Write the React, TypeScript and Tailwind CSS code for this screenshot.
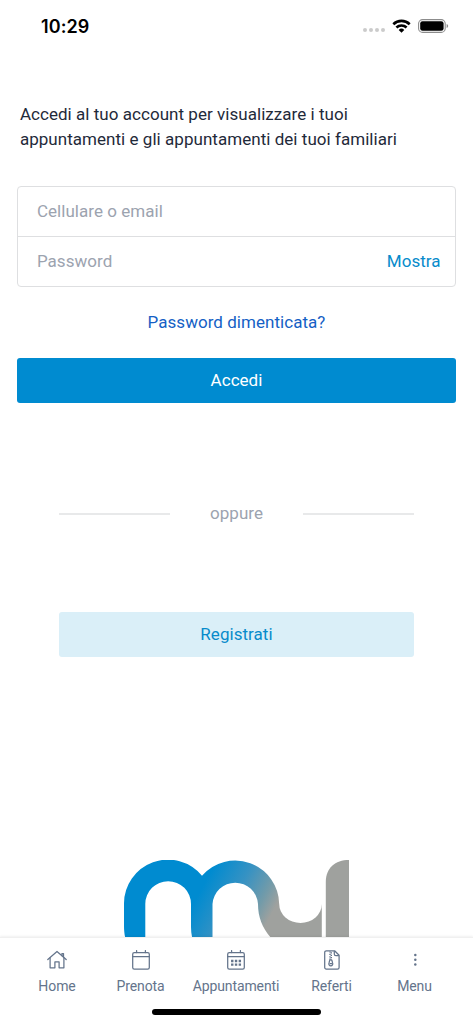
import type { ReactNode } from "react";

function HomeIcon() {
  return (
    <svg width="20" height="20" viewBox="0 0 20 20" fill="none" stroke="currentColor" strokeWidth="1.25" strokeLinecap="round" strokeLinejoin="round">
      <path d="M.8 9.5 10 1.5l9.2 8" />
      <path d="M3.1 7.8v10h4.8v-5.9h4.2v5.9h4.8v-10" />
      <path d="M14.9 5.6V3.6h1.6v3.4" />
    </svg>
  );
}

function CalendarIcon({ days = false }: { days?: boolean }) {
  return (
    <svg width="20" height="20" viewBox="0 0 20 20" fill="none" stroke="currentColor" strokeWidth="1.25" strokeLinecap="round">
      <rect x="1.7" y="2.6" width="16.6" height="16.4" rx="1.6" />
      <path d="M1.7 6.6h16.6M5.6.6v2M14.4.6v2" />
      {days && (
        <path d="M6.2 11h.1M10 11h.1M13.8 11h.1M6.2 14.7h.1M10 14.7h.1M13.8 14.7h.1" strokeWidth="2.3" strokeLinecap="square" />
      )}
    </svg>
  );
}

function ZipFileIcon() {
  return (
    <svg width="20" height="20" viewBox="0 0 20 20" fill="none" stroke="currentColor" strokeWidth="1.25" strokeLinejoin="round">
      <path d="M4.3.8h8.3l4.5 4.5v12.2a1.6 1.6 0 0 1-1.6 1.6H4.3a1.6 1.6 0 0 1-1.6-1.6V2.4A1.6 1.6 0 0 1 4.3.8Z" />
      <path d="M12.3 1v3a1.6 1.6 0 0 0 1.6 1.6h3" />
      <path d="M8 1.4v8.4M9.3 2.3v8" strokeWidth="1.4" strokeDasharray="1.2 1.2" />
      <path d="M7.8 10h2l.8 3a2 2 0 1 1-3.6 0Z" strokeWidth="1.2" />
      <path d="M8.1 13.7h1.5" strokeWidth="1.2" strokeLinecap="round" />
    </svg>
  );
}

function DotsIcon() {
  return (
    <svg width="20" height="20" viewBox="0 0 20 20" fill="currentColor">
      <circle cx="10.3" cy="4.9" r="1.25" />
      <circle cx="10.3" cy="9.7" r="1.25" />
      <circle cx="10.3" cy="14.5" r="1.25" />
    </svg>
  );
}

function Logo() {
  return (
    <svg className="block shrink-0" width="226" height="90" viewBox="124 860 226 90">
      <defs>
        <linearGradient id="brand" gradientUnits="userSpaceOnUse" x1="204" y1="884" x2="269" y2="919">
          <stop offset="0" stopColor="#008bd0" />
          <stop offset="0.45" stopColor="#3692c3" />
          <stop offset="0.8" stopColor="#739ba9" />
          <stop offset="1" stopColor="#9fa19e" />
        </linearGradient>
      </defs>
      <path
        fill="url(#brand)"
        d="M124 904A44 44 0 0 1 202 875.7A44 44 0 0 1 279.2 904A21.3 19 0 0 0 321.8 904V950H285C268 938 258 924 258 904A22.8 22.8 0 0 0 212.5 904V950H198C194 946 191 937 191 927V904A22.8 22.8 0 0 0 145.3 904V950H131C127 946 124 937 124 926Z"
      />
      <path fill="#9fa19e" d="M325.8 950V882C325.8 868 335 860 349 860V950Z" />
    </svg>
  );
}

function StatusBar() {
  return (
    <div className="flex h-[52px] items-center justify-between pr-6 pl-[41px]">
      <span className="font-['Inter',sans-serif] text-[18px] font-semibold tracking-[0.1px] text-black">10:29</span>
      <div className="flex items-center">
        <div className="mt-2 flex gap-[2px]">
          <i className="size-1 rounded-full bg-[#cbcbcb]" />
          <i className="size-1 rounded-full bg-[#cbcbcb]" />
          <i className="size-1 rounded-full bg-[#cbcbcb]" />
          <i className="size-1 rounded-full bg-[#cbcbcb]" />
        </div>
        <svg className="ml-[7px]" width="19" height="14" viewBox="0 0 19 14" fill="none" stroke="#000" strokeWidth="2.6">
          <path d="M1.3 5.2a11.8 11.8 0 0 1 16.4 0" />
          <path d="M4.4 8.5a7.4 7.4 0 0 1 10.2 0" />
          <path d="M9.5 13.7 6.7 10.9a4 4 0 0 1 5.6 0Z" fill="#000" stroke="none" />
        </svg>
        <svg className="ml-[7px]" width="31" height="14" viewBox="0 0 31 14">
          <rect x=".6" y=".6" width="26.6" height="12.8" rx="4" fill="none" stroke="#8c8c8c" strokeWidth="1.1" />
          <rect x="2.2" y="2.2" width="23.4" height="9.6" rx="2.3" />
          <path d="M28.6 5v4q1.6-.6 1.6-2t-1.6-2Z" fill="#8c8c8c" />
        </svg>
      </div>
    </div>
  );
}

function NavItem({ icon, label, className }: { icon: ReactNode; label: string; className: string }) {
  return (
    <a className={`flex shrink-0 flex-col items-center ${className}`}>
      {icon}
      <span className="mt-[6px] text-[14px] leading-5 tracking-[-0.1px]">{label}</span>
    </a>
  );
}

export default function App() {
  return (
    <div className="flex h-[1024px] w-[473px] flex-col overflow-hidden bg-white font-['Roboto',sans-serif] text-[17px] tracking-[0.04px]">
      <StatusBar />

      <main className="flex min-h-0 flex-1 flex-col overflow-hidden px-[17.4px]">
        <p className="mt-[50px] pl-[2.5px] leading-[25px] text-[#1f2a3a]">
          Accedi al tuo account per visualizzare i tuoi
          <br />
          appuntamenti e gli appuntamenti dei tuoi familiari
        </p>

        <div className="mt-[34px] h-[101px] shrink-0 rounded border border-[#dedfe1]">
          <div className="flex h-[50px] items-center border-b border-[#dedfe1] pl-[18.5px]">
            <span className="text-[#9ca3af]">Cellulare o email</span>
          </div>
          <div className="flex h-[49px] items-center justify-between pr-[14px] pl-[18.5px]">
            <span className="text-[#9ca3af]">Password</span>
            <button className="text-[#078bcb]">Mostra</button>
          </div>
        </div>

        <a className="mt-[23px] self-center leading-[25px] text-[#155fc5]">Password dimenticata?</a>

        <button className="mt-[23px] h-[45.4px] shrink-0 rounded-[3px] bg-[#008bd0] text-white">Accedi</button>

        <div className="mx-[41.5px] mt-[98px] flex items-center justify-between">
          <div className="h-[2px] w-[111px] bg-[#e8e9ea]" />
          <span className="leading-[25px] text-[#9ca3af]">oppure</span>
          <div className="h-[2px] w-[111px] bg-[#e8e9ea]" />
        </div>

        <button className="mx-[41.5px] mt-[85.6px] h-[45.4px] shrink-0 rounded-[3px] bg-[#daeff8] text-[#078bcb]">
          Registrati
        </button>

        <div className="mt-[202.5px] flex pl-[106.6px]">
          <Logo />
        </div>
      </main>

      <nav className="relative flex h-[87px] shrink-0 flex-col border-t border-[#f0f0f0] bg-white text-[#64748b] shadow-[0_-1px_2px_rgba(0,0,0,0.06)]">
        <div className="flex pt-[11.5px] pl-[14.5px]">
          <NavItem icon={<HomeIcon />} label="Home" className="w-[85px]" />
          <NavItem icon={<CalendarIcon />} label="Prenota" className="w-[82px]" />
          <NavItem icon={<CalendarIcon days />} label="Appuntamenti" className="w-[109px]" />
          <NavItem icon={<ZipFileIcon />} label="Referti" className="w-[82px]" />
          <NavItem icon={<DotsIcon />} label="Menu" className="w-[84px]" />
        </div>
        <div className="mt-[13px] h-[6px] w-[169px] self-center rounded-full bg-black" />
      </nav>
    </div>
  );
}
